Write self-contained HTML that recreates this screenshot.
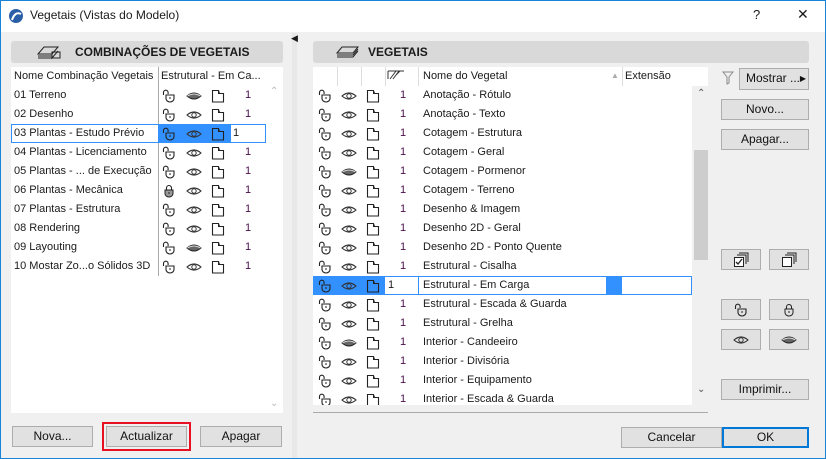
<!DOCTYPE html>
<html><head><meta charset="utf-8"><style>
*{box-sizing:border-box;margin:0;padding:0}
body{width:826px;height:459px;overflow:hidden;background:#f0f0f0;font-family:"Liberation Sans",sans-serif;font-size:11px;color:#1a1a1a;position:relative}
.a{position:absolute}
.win{position:absolute;left:0;top:0;width:826px;height:459px;border:1px solid #1883d7}
.title{left:1px;top:1px;width:824px;height:31px;background:#fff}
.hdr{background:#d9d9d9;border-radius:3px;height:22px;font-weight:bold;font-size:12px;line-height:22px}
.tbl{background:#fff}
.btn{position:absolute;background:#e1e1e1;border:1px solid #adadad;text-align:center;line-height:19px;font-size:12px;color:#111}
.row{position:absolute;height:19px;line-height:19px;white-space:nowrap}
.n{color:#4a0d4a}
svg.i{position:absolute;width:16px;height:16px}
.sel{background:#3391ff}
</style></head><body>
<svg width="0" height="0" style="position:absolute">
<defs>
<symbol id="lo" viewBox="0 0 16 16"><path d="M2.5 7V4.5a2.3 2.3 0 0 1 4.6 0V6" fill="none" stroke="#222" stroke-width="1.1"/><path d="M5 7h8v3.5a4 3.5 0 0 1-8 0z" fill="none" stroke="#222" stroke-width="1.1"/><path d="M9 9v2" stroke="#222"/></symbol>
<symbol id="lc" viewBox="0 0 16 16"><path d="M5.5 7V5a2.5 2.5 0 0 1 5 0v2" fill="none" stroke="#222" stroke-width="1.1"/><path d="M4 7h8v3.5a4 3.5 0 0 1-8 0z" fill="#999" stroke="#222"/><path d="M8 9v2" stroke="#222"/></symbol>
<symbol id="ey" viewBox="0 0 16 16"><path d="M1 8Q8 2 15 8Q8 14 1 8z" fill="none" stroke="#333" stroke-width="1.1"/><circle cx="8" cy="8" r="2.2" fill="none" stroke="#333"/></symbol>
<symbol id="eh" viewBox="0 0 16 16"><path d="M1 8Q8 2 15 8Q8 14 1 8z" fill="#666" stroke="#222"/><path d="M1.5 8Q8 4 14.5 8" fill="none" stroke="#ddd"/></symbol>
<symbol id="ly" viewBox="0 0 16 16"><path d="M2.5 14V2.5h6l1 3h4V14z" fill="none" stroke="#222" stroke-width="1.1"/><path d="M8.5 2.5v3h1" fill="none" stroke="#222"/></symbol>
</defs></svg>
<div class="win"></div>
<div class="a title"></div>
<svg class="a" style="left:8px;top:8px" width="16" height="16" viewBox="0 0 16 16"><circle cx="8" cy="8" r="7" fill="#2a5fa8"/><path d="M4 12Q7 3 13 6" fill="none" stroke="#fff" stroke-width="2"/></svg>
<div class="a" style="left:30px;top:8px;font-size:12px">Vegetais (Vistas do Modelo)</div>
<div class="a" style="left:753px;top:7px;font-size:13px">?</div>
<div class="a" style="left:797px;top:6px;font-size:14px;font-weight:normal">✕</div>

<!-- left -->
<div class="a hdr" style="left:11px;top:41px;width:272px"><span style="position:absolute;left:64px">COMBINAÇÕES DE VEGETAIS</span></div>
<svg class="a" style="left:36px;top:44px" width="26" height="16" viewBox="0 0 26 16"><path d="M2 10l6-7h14l-6 7z M2 12h14 M2 14h14 M16 10v4l6-7" fill="none" stroke="#222"/><rect x="16" y="8" width="8" height="6" fill="none" stroke="#222"/></svg>
<div class="a tbl" style="left:11px;top:67px;width:272px;height:346px"></div>
<div class="a" style="left:14px;top:70px">Nome Combinação Vegetais</div>
<div class="a" style="left:158px;top:67px;width:1px;height:209px;background:#aaa"></div>
<div class="a" style="left:161px;top:70px">Estrutural - Em Ca...</div>
<div class="a" style="left:265px;top:86px;width:18px;height:327px;background:#fff"></div>
<div class="a" style="left:270px;top:86px;color:#bbb;font-size:10px">⌃</div>
<div class="a" style="left:270px;top:398px;color:#bbb;font-size:10px">⌄</div>
<div class="a sel" style="left:159px;top:124px;width:72px;height:19px"></div>
<div class="a" style="left:11px;top:124px;width:255px;height:19px;border:1px solid #3391ff"></div>
<div class="a" style="left:158px;top:124px;width:1px;height:19px;background:#3391ff"></div>

<div class="row" style="left:14px;top:86px">01 Terreno</div>
<div class="row" style="left:14px;top:105px">02 Desenho</div>
<div class="row" style="left:14px;top:124px">03 Plantas - Estudo Prévio</div>
<div class="row" style="left:14px;top:143px">04 Plantas - Licenciamento</div>
<div class="row" style="left:14px;top:162px">05 Plantas - ... de Execução</div>
<div class="row" style="left:14px;top:181px">06 Plantas - Mecânica</div>
<div class="row" style="left:14px;top:200px">07 Plantas - Estrutura</div>
<div class="row" style="left:14px;top:219px">08 Rendering</div>
<div class="row" style="left:14px;top:238px">09 Layouting</div>
<div class="row" style="left:14px;top:257px">10 Mostar Zo...o Sólidos 3D</div>

<svg class="i" style="left:161px;top:88px"><use href="#lo"/></svg><svg class="i" style="left:186px;top:88px"><use href="#eh"/></svg><svg class="i" style="left:210px;top:88px"><use href="#ly"/></svg><div class="row n" style="left:245px;top:86px">1</div>
<svg class="i" style="left:161px;top:107px"><use href="#lo"/></svg><svg class="i" style="left:186px;top:107px"><use href="#ey"/></svg><svg class="i" style="left:210px;top:107px"><use href="#ly"/></svg><div class="row n" style="left:245px;top:105px">1</div>
<svg class="i" style="left:161px;top:126px"><use href="#lo"/></svg><svg class="i" style="left:186px;top:126px"><use href="#ey"/></svg><svg class="i" style="left:210px;top:126px"><use href="#ly"/></svg><div class="row" style="left:233px;top:124px">1</div>
<svg class="i" style="left:161px;top:145px"><use href="#lo"/></svg><svg class="i" style="left:186px;top:145px"><use href="#ey"/></svg><svg class="i" style="left:210px;top:145px"><use href="#ly"/></svg><div class="row n" style="left:245px;top:143px">1</div>
<svg class="i" style="left:161px;top:164px"><use href="#lo"/></svg><svg class="i" style="left:186px;top:164px"><use href="#ey"/></svg><svg class="i" style="left:210px;top:164px"><use href="#ly"/></svg><div class="row n" style="left:245px;top:162px">1</div>
<svg class="i" style="left:161px;top:183px"><use href="#lc"/></svg><svg class="i" style="left:186px;top:183px"><use href="#ey"/></svg><svg class="i" style="left:210px;top:183px"><use href="#ly"/></svg><div class="row n" style="left:245px;top:181px">1</div>
<svg class="i" style="left:161px;top:202px"><use href="#lo"/></svg><svg class="i" style="left:186px;top:202px"><use href="#ey"/></svg><svg class="i" style="left:210px;top:202px"><use href="#ly"/></svg><div class="row n" style="left:245px;top:200px">1</div>
<svg class="i" style="left:161px;top:221px"><use href="#lo"/></svg><svg class="i" style="left:186px;top:221px"><use href="#ey"/></svg><svg class="i" style="left:210px;top:221px"><use href="#ly"/></svg><div class="row n" style="left:245px;top:219px">1</div>
<svg class="i" style="left:161px;top:240px"><use href="#lo"/></svg><svg class="i" style="left:186px;top:240px"><use href="#eh"/></svg><svg class="i" style="left:210px;top:240px"><use href="#ly"/></svg><div class="row n" style="left:245px;top:238px">1</div>
<svg class="i" style="left:161px;top:259px"><use href="#lo"/></svg><svg class="i" style="left:186px;top:259px"><use href="#ey"/></svg><svg class="i" style="left:210px;top:259px"><use href="#ly"/></svg><div class="row n" style="left:245px;top:257px">1</div>

<div class="btn" style="left:12px;top:426px;width:81px;height:21px">Nova...</div>
<div class="a" style="left:102px;top:422px;width:89px;height:29px;border:2px solid #e81123"></div>
<div class="btn" style="left:106px;top:426px;width:81px;height:21px">Actualizar</div>
<div class="btn" style="left:200px;top:426px;width:82px;height:21px">Apagar</div>

<div class="a" style="left:292px;top:33px;width:5px;height:425px;background:#e8e8e8"></div>
<div class="a" style="left:291px;top:33px;font-size:9px">◀</div>

<!-- right -->
<div class="a hdr" style="left:313px;top:41px;width:496px"><span style="position:absolute;left:55px">VEGETAIS</span></div>
<svg class="a" style="left:335px;top:44px" width="26" height="16" viewBox="0 0 26 16"><path d="M2 9l5-6h16l-5 6z M2 11h16l5-6 M2 13h16l5-6" fill="none" stroke="#222"/></svg>
<div class="a tbl" style="left:313px;top:67px;width:395px;height:338px"></div>
<div class="a" style="left:337px;top:67px;width:1px;height:19px;background:#ddd"></div>
<div class="a" style="left:361px;top:67px;width:1px;height:19px;background:#ddd"></div>
<div class="a" style="left:385px;top:67px;width:1px;height:19px;background:#ddd"></div>
<div class="a" style="left:418px;top:67px;width:1px;height:19px;background:#ddd"></div>
<div class="a" style="left:622px;top:67px;width:1px;height:19px;background:#ddd"></div>
<svg class="a" style="left:387px;top:70px" width="18" height="10" viewBox="0 0 18 10"><path d="M1 1h16 M1 1v8 M3 9l6-8 M6 9l6-8 M9 5l4-4" fill="none" stroke="#333"/></svg>
<div class="a" style="left:423px;top:70px">Nome do Vegetal</div>
<div class="a" style="left:611px;top:71px;color:#aaa;font-size:8px">▲</div>
<div class="a" style="left:625px;top:70px">Extensão</div>
<div class="a" style="left:692px;top:86px;width:16px;height:319px;background:#f0f0f0"></div>
<div class="a" style="left:694px;top:150px;width:14px;height:110px;background:#cdcdcd"></div>
<div class="a" style="left:697px;top:88px;font-size:10px;color:#555">⌃</div>
<div class="a" style="left:697px;top:384px;font-size:10px;color:#555">⌄</div>
<div class="a" style="left:313px;top:412px;width:395px;height:1px;background:#aaa"></div>

<div class="a sel" style="left:313px;top:276px;width:72px;height:19px"></div>
<div class="a sel" style="left:606px;top:276px;width:16px;height:19px"></div>
<div class="a" style="left:313px;top:276px;width:379px;height:19px;border:1px solid #3391ff"></div>
<div class="a" style="left:418px;top:276px;width:1px;height:19px;background:#3391ff"></div>

<div style="position:absolute;left:0;top:0;width:826px;height:405px;overflow:hidden">
<div class="row" style="left:423px;top:86px">Anotação - Rótulo</div>
<div class="row" style="left:423px;top:105px">Anotação - Texto</div>
<div class="row" style="left:423px;top:124px">Cotagem - Estrutura</div>
<div class="row" style="left:423px;top:143px">Cotagem - Geral</div>
<div class="row" style="left:423px;top:162px">Cotagem - Pormenor</div>
<div class="row" style="left:423px;top:181px">Cotagem - Terreno</div>
<div class="row" style="left:423px;top:200px">Desenho &amp; Imagem</div>
<div class="row" style="left:423px;top:219px">Desenho 2D - Geral</div>
<div class="row" style="left:423px;top:238px">Desenho 2D - Ponto Quente</div>
<div class="row" style="left:423px;top:257px">Estrutural - Cisalha</div>
<div class="row" style="left:423px;top:276px">Estrutural - Em Carga</div>
<div class="row" style="left:423px;top:295px">Estrutural - Escada &amp; Guarda</div>
<div class="row" style="left:423px;top:314px">Estrutural - Grelha</div>
<div class="row" style="left:423px;top:333px">Interior - Candeeiro</div>
<div class="row" style="left:423px;top:352px">Interior - Divisória</div>
<div class="row" style="left:423px;top:371px">Interior - Equipamento</div>
<div class="row" style="left:423px;top:390px">Interior - Escada &amp; Guarda</div>
<svg class="i" style="left:317px;top:88px"><use href="#lo"/></svg><svg class="i" style="left:341px;top:88px"><use href="#ey"/></svg><svg class="i" style="left:365px;top:88px"><use href="#ly"/></svg><div class="row n" style="left:400px;top:86px">1</div>
<svg class="i" style="left:317px;top:107px"><use href="#lo"/></svg><svg class="i" style="left:341px;top:107px"><use href="#ey"/></svg><svg class="i" style="left:365px;top:107px"><use href="#ly"/></svg><div class="row n" style="left:400px;top:105px">1</div>
<svg class="i" style="left:317px;top:126px"><use href="#lo"/></svg><svg class="i" style="left:341px;top:126px"><use href="#ey"/></svg><svg class="i" style="left:365px;top:126px"><use href="#ly"/></svg><div class="row n" style="left:400px;top:124px">1</div>
<svg class="i" style="left:317px;top:145px"><use href="#lo"/></svg><svg class="i" style="left:341px;top:145px"><use href="#ey"/></svg><svg class="i" style="left:365px;top:145px"><use href="#ly"/></svg><div class="row n" style="left:400px;top:143px">1</div>
<svg class="i" style="left:317px;top:164px"><use href="#lo"/></svg><svg class="i" style="left:341px;top:164px"><use href="#eh"/></svg><svg class="i" style="left:365px;top:164px"><use href="#ly"/></svg><div class="row n" style="left:400px;top:162px">1</div>
<svg class="i" style="left:317px;top:183px"><use href="#lo"/></svg><svg class="i" style="left:341px;top:183px"><use href="#ey"/></svg><svg class="i" style="left:365px;top:183px"><use href="#ly"/></svg><div class="row n" style="left:400px;top:181px">1</div>
<svg class="i" style="left:317px;top:202px"><use href="#lo"/></svg><svg class="i" style="left:341px;top:202px"><use href="#ey"/></svg><svg class="i" style="left:365px;top:202px"><use href="#ly"/></svg><div class="row n" style="left:400px;top:200px">1</div>
<svg class="i" style="left:317px;top:221px"><use href="#lo"/></svg><svg class="i" style="left:341px;top:221px"><use href="#ey"/></svg><svg class="i" style="left:365px;top:221px"><use href="#ly"/></svg><div class="row n" style="left:400px;top:219px">1</div>
<svg class="i" style="left:317px;top:240px"><use href="#lo"/></svg><svg class="i" style="left:341px;top:240px"><use href="#ey"/></svg><svg class="i" style="left:365px;top:240px"><use href="#ly"/></svg><div class="row n" style="left:400px;top:238px">1</div>
<svg class="i" style="left:317px;top:259px"><use href="#lo"/></svg><svg class="i" style="left:341px;top:259px"><use href="#ey"/></svg><svg class="i" style="left:365px;top:259px"><use href="#ly"/></svg><div class="row n" style="left:400px;top:257px">1</div>
<svg class="i" style="left:317px;top:278px"><use href="#lo"/></svg><svg class="i" style="left:341px;top:278px"><use href="#ey"/></svg><svg class="i" style="left:365px;top:278px"><use href="#ly"/></svg><div class="row" style="left:388px;top:276px">1</div>
<svg class="i" style="left:317px;top:297px"><use href="#lo"/></svg><svg class="i" style="left:341px;top:297px"><use href="#ey"/></svg><svg class="i" style="left:365px;top:297px"><use href="#ly"/></svg><div class="row n" style="left:400px;top:295px">1</div>
<svg class="i" style="left:317px;top:316px"><use href="#lo"/></svg><svg class="i" style="left:341px;top:316px"><use href="#ey"/></svg><svg class="i" style="left:365px;top:316px"><use href="#ly"/></svg><div class="row n" style="left:400px;top:314px">1</div>
<svg class="i" style="left:317px;top:335px"><use href="#lo"/></svg><svg class="i" style="left:341px;top:335px"><use href="#eh"/></svg><svg class="i" style="left:365px;top:335px"><use href="#ly"/></svg><div class="row n" style="left:400px;top:333px">1</div>
<svg class="i" style="left:317px;top:354px"><use href="#lo"/></svg><svg class="i" style="left:341px;top:354px"><use href="#ey"/></svg><svg class="i" style="left:365px;top:354px"><use href="#ly"/></svg><div class="row n" style="left:400px;top:352px">1</div>
<svg class="i" style="left:317px;top:373px"><use href="#lo"/></svg><svg class="i" style="left:341px;top:373px"><use href="#ey"/></svg><svg class="i" style="left:365px;top:373px"><use href="#ly"/></svg><div class="row n" style="left:400px;top:371px">1</div>
<svg class="i" style="left:317px;top:392px"><use href="#lo"/></svg><svg class="i" style="left:341px;top:392px"><use href="#ey"/></svg><svg class="i" style="left:365px;top:392px"><use href="#ly"/></svg><div class="row n" style="left:400px;top:390px">1</div>
</div>

<svg class="a" style="left:722px;top:71px" width="12" height="14" viewBox="0 0 12 14"><path d="M1 1h10L7 6v6L5 13V6z" fill="none" stroke="#888"/></svg>
<div class="btn" style="left:739px;top:68px;width:70px;height:22px;text-align:left;padding-left:6px">Mostrar ... <span style="position:absolute;right:2px;font-size:8px">▶</span></div>
<div class="btn" style="left:721px;top:99px;width:88px;height:21px">Novo...</div>
<div class="btn" style="left:721px;top:129px;width:88px;height:21px">Apagar...</div>
<div class="btn" style="left:721px;top:249px;width:40px;height:21px"><svg width="16" height="16" viewBox="0 0 16 16" style="margin-top:2px"><path d="M6 1h9v9 M4 3h9v9" fill="none" stroke="#222"/><rect x="1.5" y="5.5" width="9" height="9" fill="#fff" stroke="#222"/><path d="M3 10l2 2 4-5" fill="none" stroke="#222" stroke-width="1.3"/></svg></div>
<div class="btn" style="left:769px;top:249px;width:40px;height:21px"><svg width="16" height="16" viewBox="0 0 16 16" style="margin-top:2px"><path d="M6 1h9v9 M4 3h9v9" fill="none" stroke="#222"/><rect x="1.5" y="5.5" width="9" height="9" fill="#fff" stroke="#222"/></svg></div>
<div class="btn" style="left:721px;top:299px;width:40px;height:21px"><svg width="16" height="16" style="margin-top:2px"><use href="#lo"/></svg></div>
<div class="btn" style="left:769px;top:299px;width:40px;height:21px"><svg width="16" height="16" style="margin-top:2px" viewBox="0 0 16 16"><path d="M5.5 7V5a2.5 2.5 0 0 1 5 0v2" fill="none" stroke="#222"/><path d="M4 7h8v3.5a4 3.5 0 0 1-8 0z" fill="none" stroke="#222"/><path d="M8 9v2" stroke="#222"/></svg></div>
<div class="btn" style="left:721px;top:329px;width:40px;height:21px"><svg width="16" height="16" style="margin-top:2px"><use href="#ey"/></svg></div>
<div class="btn" style="left:769px;top:329px;width:40px;height:21px"><svg width="16" height="16" style="margin-top:2px"><use href="#eh"/></svg></div>
<div class="btn" style="left:721px;top:379px;width:88px;height:21px">Imprimir...</div>

<div class="btn" style="left:621px;top:427px;width:101px;height:21px">Cancelar</div>
<div class="btn" style="left:722px;top:427px;width:87px;height:21px;border:2px solid #0078d7;line-height:17px">OK</div>
</body></html>
